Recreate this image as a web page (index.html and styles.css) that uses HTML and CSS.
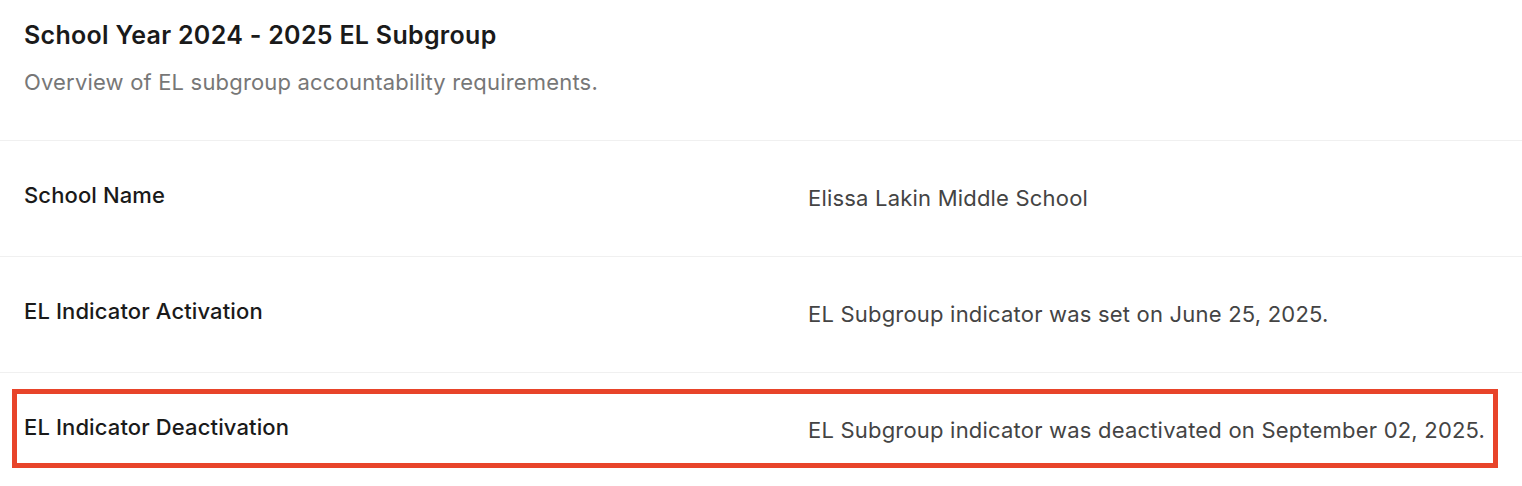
FILE: index.html
```html
<!DOCTYPE html>
<html lang="en">
<head>
<meta charset="utf-8">
<title>School Year 2024 - 2025 EL Subgroup</title>
<link rel="stylesheet" href="styles.css">
</head>
<body>
  <section class="card">
    <header class="card-header">
      <h1 class="card-title">School Year 2024 - 2025 EL Subgroup</h1>
      <p class="card-subtitle">Overview of EL subgroup accountability requirements.</p>
    </header>
    <dl class="details">
      <div class="row">
        <dt class="label">School Name</dt>
        <dd class="value">Elissa Lakin Middle School</dd>
      </div>
      <div class="row">
        <dt class="label">EL Indicator Activation</dt>
        <dd class="value">EL Subgroup indicator was set on June 25, 2025.</dd>
      </div>
      <div class="row row-highlight">
        <dt class="label">EL Indicator Deactivation</dt>
        <dd class="value">EL Subgroup indicator was deactivated on September 02, 2025.</dd>
        <span class="highlight-box" aria-hidden="true"></span>
      </div>
    </dl>
  </section>
</body>
</html>
```
FILE: styles.css
```css
* { box-sizing: border-box; }
html, body { margin: 0; padding: 0; background: #ffffff; }
body {
  font-family: Inter, "Noto Sans", "Liberation Sans", sans-serif;
  color: #1a1a1a;
}
.card { width: 1522px; }
.card-header {
  padding: 20px 24px 0;
  height: 141px;
  border-bottom: 1px solid #f0f0f0;
}
.card-title {
  margin: 0;
  font-size: 25px;
  font-weight: 600;
  letter-spacing: 0.3px;
  line-height: 30px;
  color: #1a1a1a;
}
.card-subtitle {
  margin: 17px 0 0;
  font-size: 22px;
  letter-spacing: 0.18px;
  line-height: 30px;
  color: #777777;
}
.details { margin: 0; }
.row {
  position: relative;
  display: grid;
  grid-template-columns: 784px 1fr;
  align-items: center;
  height: 116px;
  padding: 0 24px 2px;
  border-bottom: 1px solid #f0f0f0;
}
.row:last-child { border-bottom: none; }
.label {
  margin: 0;
  font-size: 22px;
  font-weight: 480;
  letter-spacing: 0.12px;
  color: #1a1a1a;
  line-height: 30px;
  margin-top: -6px;
}
.value {
  margin: 0;
  font-size: 22px;
  letter-spacing: 0.2px;
  color: #444444;
  line-height: 30px;
}
.highlight-box {
  position: absolute;
  left: 12px;
  top: 16px;
  width: 1486px;
  height: 79px;
  border: 5px solid #e8442a;
  pointer-events: none;
}
```
